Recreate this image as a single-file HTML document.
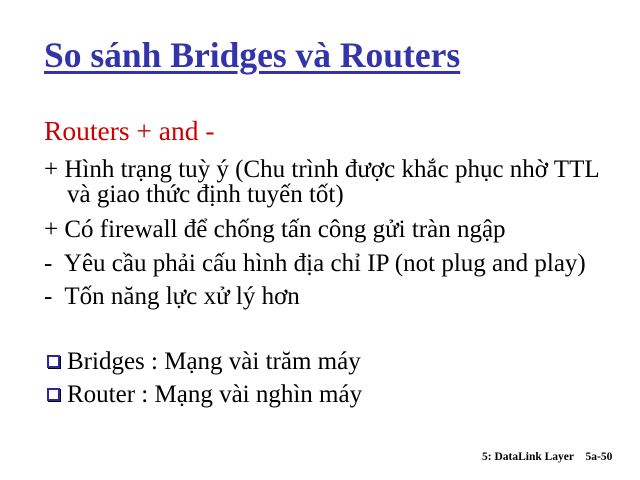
<!DOCTYPE html>
<html><head><meta charset="utf-8"><style>
body{margin:0;width:640px;height:480px;background:#fff;position:relative;font-family:"Liberation Serif",serif;overflow:hidden}
.t{position:absolute;white-space:nowrap;font-size:25px;color:#000;line-height:1}
.h{font-weight:bold;font-size:35.5px;color:#3333aa;text-decoration:underline;text-decoration-thickness:3px;text-underline-offset:4px}
.b{position:absolute;width:9px;height:9px;border:2px solid #2a2aa0;background:#fff;box-shadow:1px 1px 0 #000}
</style></head><body>
<div class="t h" style="left:44px;top:38px">So sánh Bridges và Routers</div>
<div class="t" style="left:44px;top:117px;color:#cc0000;font-size:27.5px">Routers + and -</div>
<div class="t" style="left:44px;top:157px">+ Hình trạng tuỳ ý (Chu trình được khắc phục nhờ TTL</div>
<div class="t" style="left:67px;top:182px">và giao thức định tuyến tốt)</div>
<div class="t" style="left:44px;top:217px">+ Có firewall để chống tấn công gửi tràn ngập</div>
<div class="t" style="left:44px;top:251px">-&nbsp; Yêu cầu phải cấu hình địa chỉ IP (not plug and play)</div>
<div class="t" style="left:44px;top:284px">-&nbsp; Tốn năng lực xử lý hơn</div>
<div class="b" style="left:47px;top:355px"></div>
<div class="t" style="left:67px;top:349px">Bridges : Mạng vài trăm máy</div>
<div class="b" style="left:47px;top:388px"></div>
<div class="t" style="left:67px;top:382px">Router : Mạng vài nghìn máy</div>
<div class="t" style="left:482px;top:452px;font-size:11.5px;font-weight:bold">5: DataLink Layer&nbsp;&nbsp;&nbsp; 5a-50</div>
</body></html>
